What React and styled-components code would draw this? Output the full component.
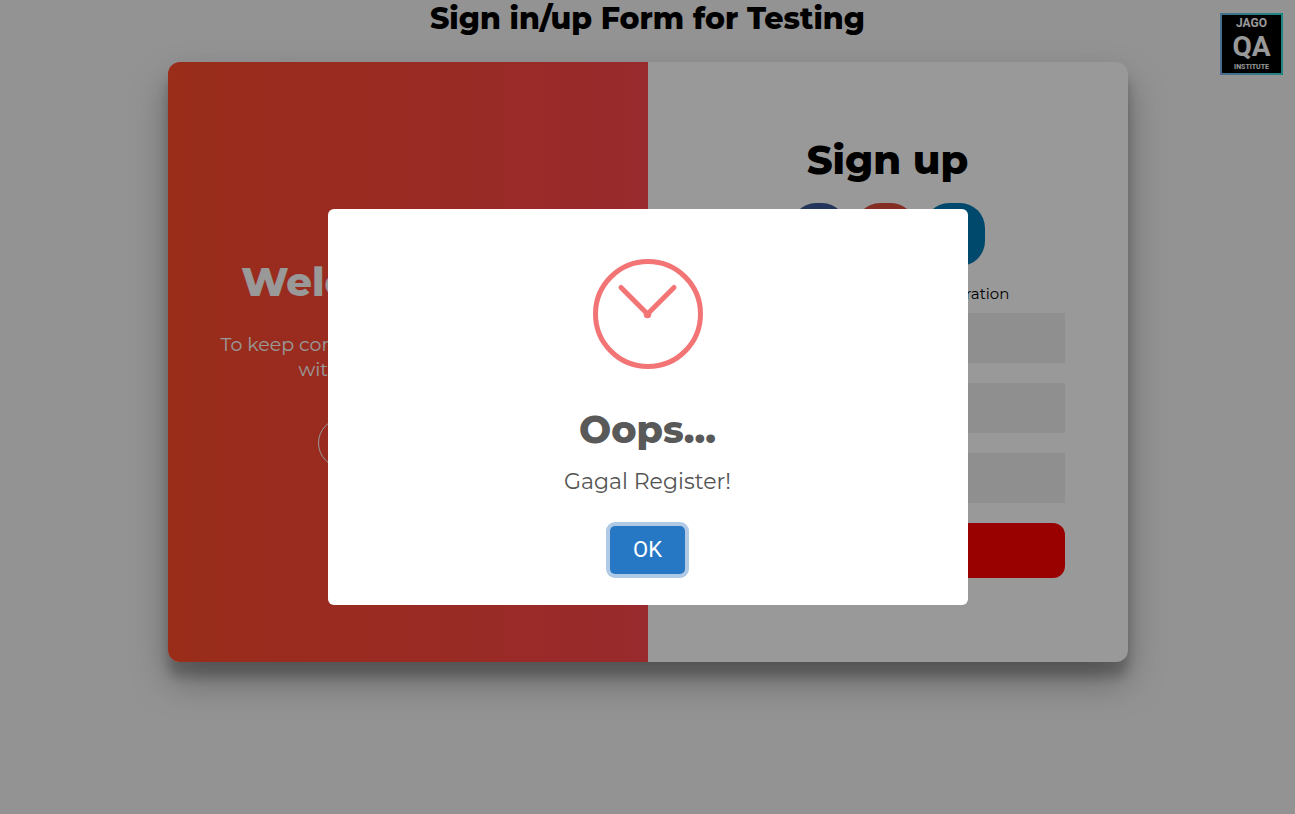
import React from "react";
import styled, { createGlobalStyle } from "styled-components";
import { FaFacebookF, FaGooglePlusG, FaLinkedinIn } from "react-icons/fa";

const GlobalStyle = createGlobalStyle`
  *, *::before, *::after { box-sizing: border-box; }
  body {
    margin: 0;
    background: #f6f5f7;
    color: #000;
    font-family: Montserrat, Inter, "Open Sans", sans-serif;
  }
  h1, h2, p { margin: 0; }
  button, input { font-family: inherit; }
`;

const Page = styled.div`
  display: flex;
  flex-direction: column;
  align-items: center;
  min-height: 100vh;
  gap: 24px;
`;

const PageTitle = styled.h1`
  font-size: 30px;
  line-height: 38px;
  font-weight: 800;
  text-align: center;
`;

const LogoLink = styled.a`
  position: fixed;
  top: 13px;
  right: 12px;
  display: flex;
  flex-direction: column;
  align-items: center;
  justify-content: center;
  width: 63px;
  height: 62px;
  border: 2px solid transparent;
  background: linear-gradient(#000, #000) padding-box,
    linear-gradient(80deg, #7fb4ee, #2fe0d8) border-box;
  color: #fff;
  font-family: Roboto, sans-serif;
  font-weight: 700;
  text-decoration: none;
`;

const LogoLine = styled.span`
  font-size: ${(p) => p.$size}px;
  line-height: ${(p) => p.$line}px;
`;

const Card = styled.main`
  display: grid;
  grid-template-columns: 1fr 1fr;
  width: calc(100% - 40px);
  max-width: 960px;
  min-height: 600px;
  border-radius: 12px;
  overflow: hidden;
  background: #fff;
  box-shadow: 0 19px 38px rgba(0, 0, 0, 0.3), 0 15px 12px rgba(0, 0, 0, 0.22);
`;

const WelcomePanel = styled.section`
  display: flex;
  flex-direction: column;
  align-items: center;
  justify-content: center;
  padding: 1px 50px 0;
  background: linear-gradient(to right, #ff4b2b, #ff416c) 0 0 / 200% 100%;
  color: #fff;
  text-align: center;
`;

const PanelHeading = styled.h2`
  font-size: 40px;
  line-height: 48px;
  font-weight: 800;
`;

const WelcomeText = styled.p`
  margin: 26px 0 36px;
  font-size: 19px;
  line-height: 25px;
`;

const GhostButton = styled.button`
  width: 180px;
  height: 50px;
  border: 1px solid #fff;
  border-radius: 25px;
  background: transparent;
  color: #fff;
  font-size: 14px;
  font-weight: 700;
`;

const SignUpForm = styled.form`
  display: flex;
  flex-direction: column;
  align-items: center;
  justify-content: center;
  padding: 0 63px 11px;
`;

const SocialRow = styled.div`
  display: flex;
  gap: 8px;
  margin: 19px 0 16px;
`;

const SocialLink = styled.a`
  display: flex;
  align-items: center;
  justify-content: center;
  width: ${(p) => p.$width}px;
  height: 63px;
  border-radius: 25px;
  background: ${(p) => p.$color};
  color: #fff;
  font-size: 22px;
`;

const FormHint = styled.p`
  margin-bottom: 8px;
  font-size: 15px;
  line-height: 23px;
  font-weight: 400;
`;

const Fields = styled.div`
  display: flex;
  flex-direction: column;
  gap: 20px;
  width: 100%;
`;

const TextInput = styled.input`
  width: 100%;
  height: 50px;
  padding: 12px 15px;
  border: 0;
  background: #eee;
  font-size: 14px;
`;

const SubmitButton = styled.button`
  height: 55px;
  border: 0;
  border-radius: 12px;
  background: #f00;
  color: #fff;
  font-size: 14px;
  font-weight: 700;
`;

const Backdrop = styled.div`
  position: fixed;
  inset: 0;
  display: flex;
  align-items: center;
  justify-content: center;
  padding: 10px;
  background: rgba(0, 0, 0, 0.4);
`;

const Dialog = styled.div`
  display: flex;
  flex-direction: column;
  align-items: center;
  width: 640px;
  max-width: 100%;
  padding: 50px 24px 31px;
  border-radius: 6px;
  background: #fff;
  text-align: center;
`;

const DialogTitle = styled.h2`
  margin-top: 37px;
  color: #595959;
  font-size: 38px;
  line-height: 48px;
  font-weight: 800;
`;

const DialogText = styled.p`
  margin: 14px 0 30px;
  color: #545454;
  font-size: 22px;
  line-height: 28px;
  font-weight: 400;
`;

const ConfirmButton = styled.button`
  width: 75px;
  height: 48px;
  padding: 0 0 2px;
  border: 0;
  border-radius: 5px;
  background: #2778c4;
  box-shadow: 0 0 0 4px #b0cae5;
  color: #fff;
  font-family: Roboto, sans-serif;
  font-size: 22px;
`;

function ClockIcon() {
  return (
    <svg width="110" height="110" viewBox="0 0 110 110" fill="none" stroke="#f27474" aria-hidden="true">
      <circle cx="55" cy="55" r="52.5" strokeWidth="5" />
      <path d="M28 28.5 54.5 55 81 28.5" strokeWidth="5" strokeLinecap="round" strokeLinejoin="round" />
      <circle cx="54.5" cy="55.5" r="3.8" fill="#f27474" stroke="none" />
    </svg>
  );
}

export default function App() {
  return (
    <>
      <GlobalStyle />
      <Page>
        <PageTitle>Sign in/up Form for Testing</PageTitle>
        <Card>
          <WelcomePanel>
            <PanelHeading>Welcome Back!</PanelHeading>
            <WelcomeText>
              To keep connected with us please login with your personal info
            </WelcomeText>
            <GhostButton type="button">SIGN IN</GhostButton>
          </WelcomePanel>
          <SignUpForm>
            <PanelHeading>Sign up</PanelHeading>
            <SocialRow>
              <SocialLink href="#facebook" aria-label="Facebook" $width={56} $color="#3b5998">
                <FaFacebookF />
              </SocialLink>
              <SocialLink href="#google" aria-label="Google" $width={61} $color="#dd4b39">
                <FaGooglePlusG />
              </SocialLink>
              <SocialLink href="#linkedin" aria-label="LinkedIn" $width={61} $color="#007bb5">
                <FaLinkedinIn />
              </SocialLink>
            </SocialRow>
            <FormHint>or use your email for registration</FormHint>
            <Fields>
              <TextInput type="text" aria-label="Name" />
              <TextInput type="email" aria-label="Email" />
              <TextInput type="password" aria-label="Password" />
              <SubmitButton type="button">SIGN UP</SubmitButton>
            </Fields>
          </SignUpForm>
        </Card>
      </Page>
      <LogoLink href="#home">
        <LogoLine $size={12} $line={14}>JAGO</LogoLine>
        <LogoLine $size={28} $line={33}>QA</LogoLine>
        <LogoLine $size={7} $line={9}>INSTITUTE</LogoLine>
      </LogoLink>
      <Backdrop>
        <Dialog role="dialog" aria-modal="true" aria-labelledby="dialog-title">
          <ClockIcon />
          <DialogTitle id="dialog-title">Oops...</DialogTitle>
          <DialogText>Gagal Register!</DialogText>
          <ConfirmButton type="button">OK</ConfirmButton>
        </Dialog>
      </Backdrop>
    </>
  );
}
